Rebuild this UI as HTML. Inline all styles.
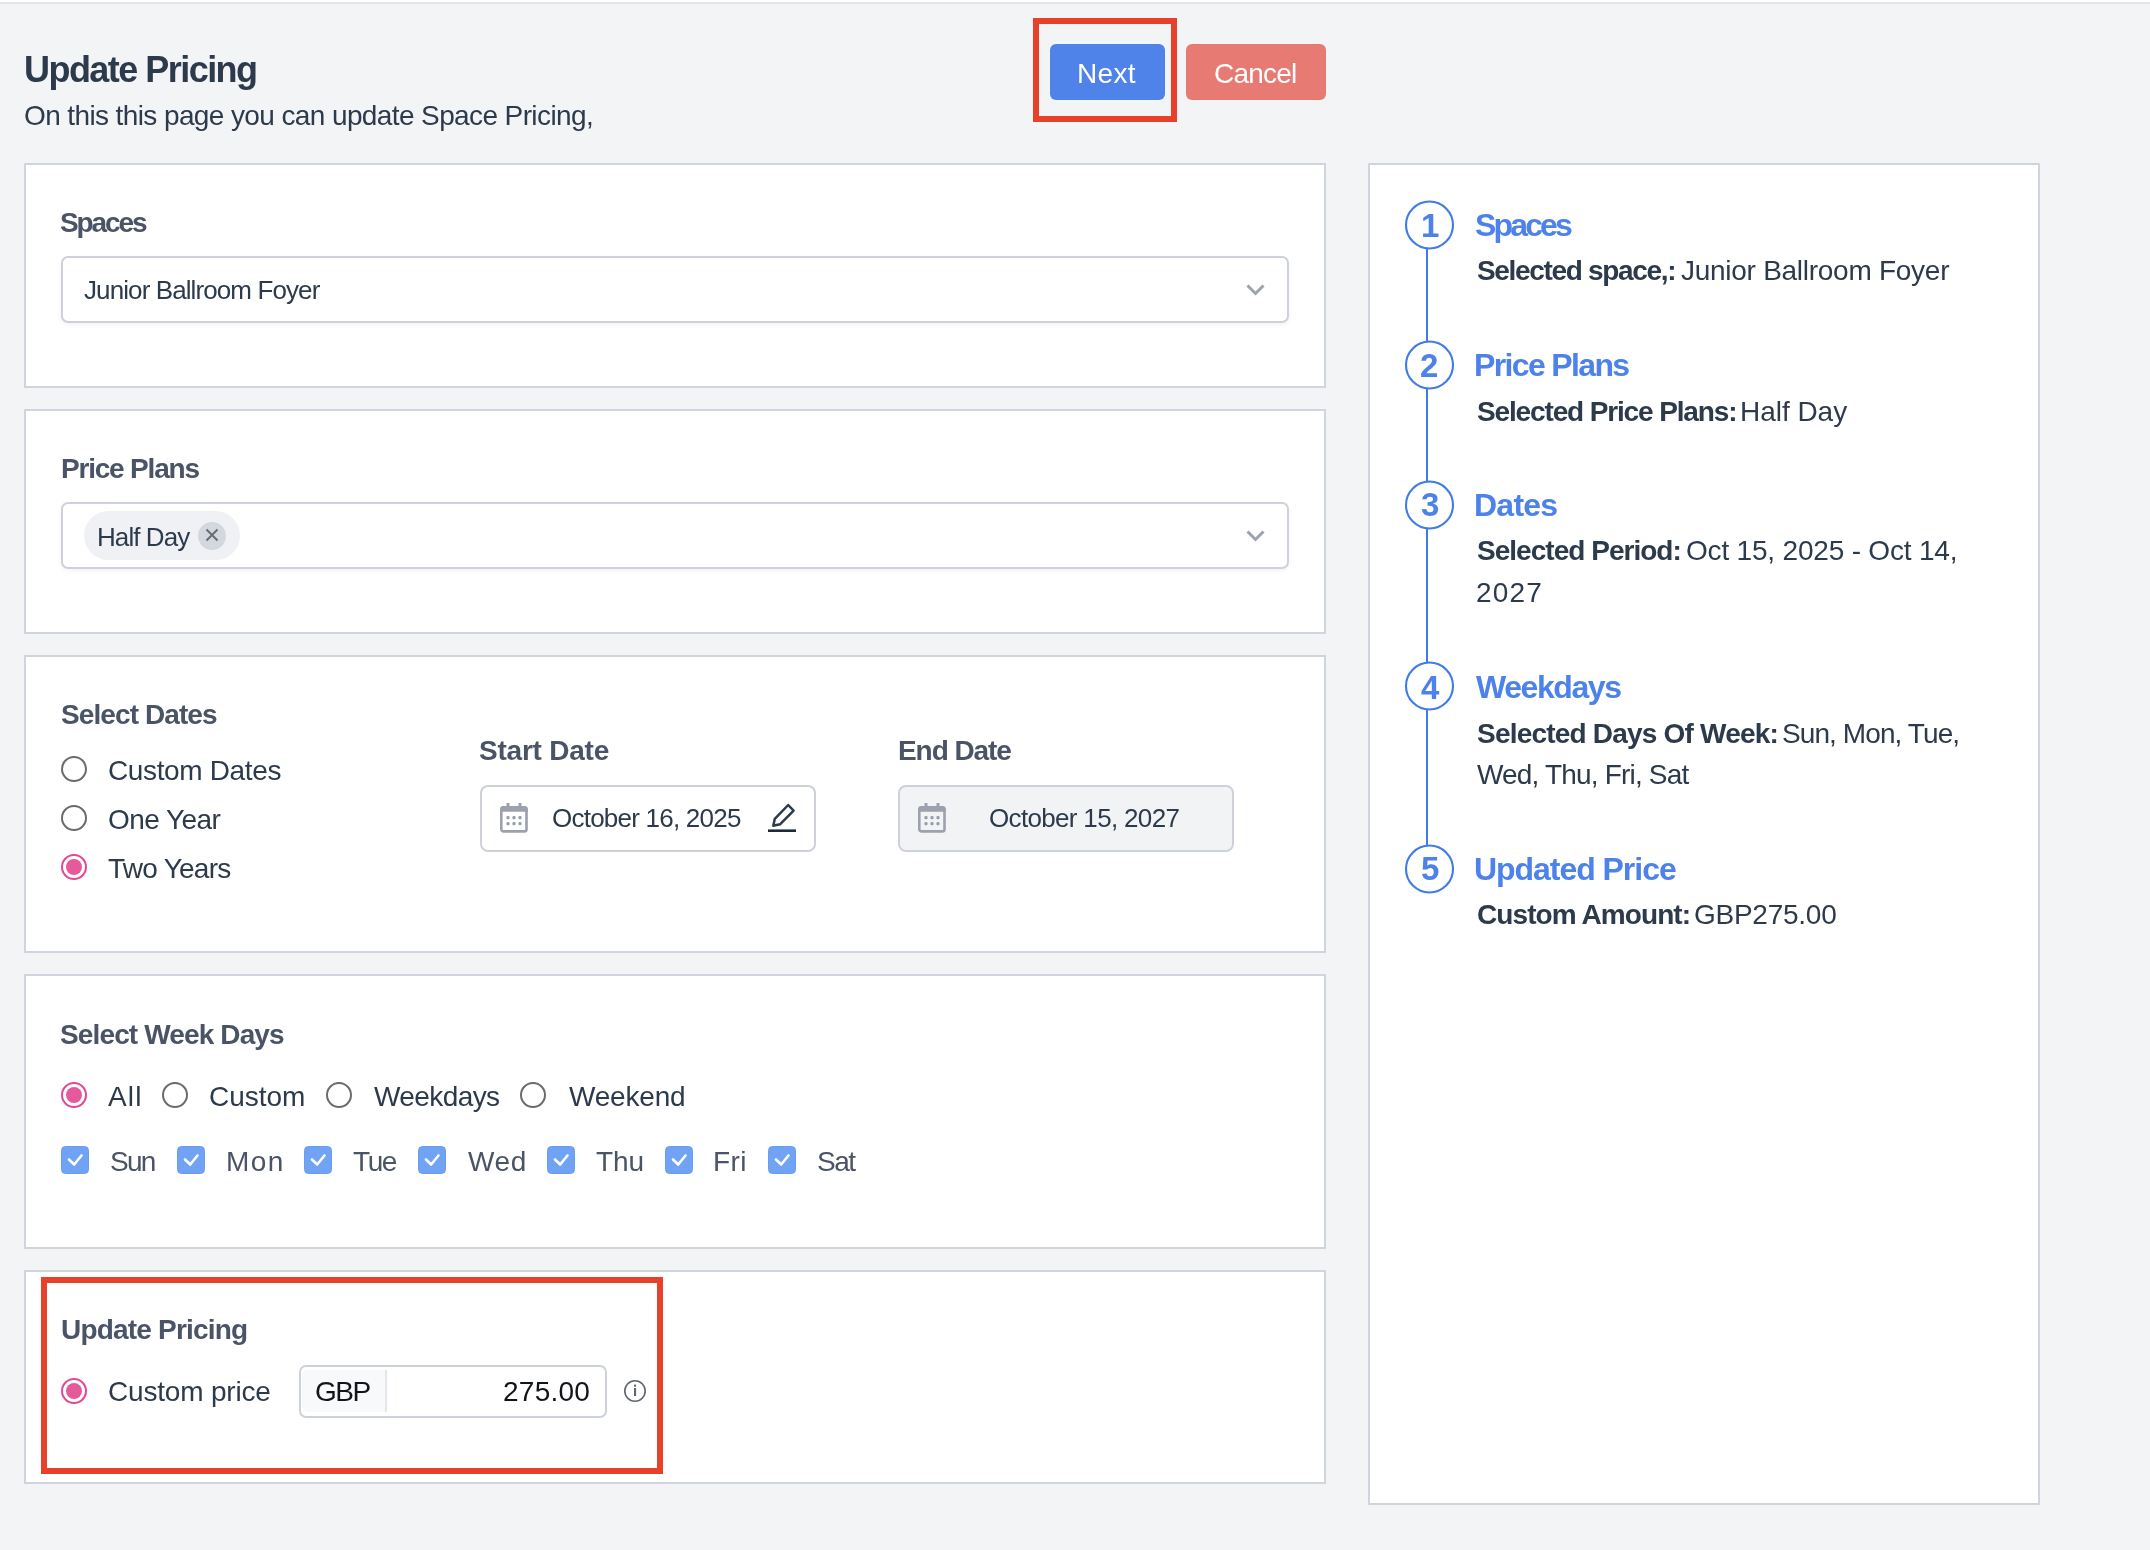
<!DOCTYPE html>
<html><head><meta charset="utf-8"><title>Update Pricing</title><style>
*{margin:0;padding:0;box-sizing:border-box}
html,body{width:2150px;height:1550px;overflow:hidden;background:#f3f4f6;font-family:"Liberation Sans",sans-serif}
.t{position:absolute;white-space:nowrap;line-height:1;will-change:transform}
.t b{font-weight:700}
.a{position:absolute}
.card{position:absolute;background:#fff;border:2px solid #d0d4dc}
.sel{position:absolute;background:#fff;border:2px solid #cdd1d9;border-radius:7px;box-shadow:0 2px 5px rgba(0,0,0,0.05)}
.inp{position:absolute;border:2px solid #cdd1d9;border-radius:8px}
.rad{position:absolute;width:26px;height:26px;border-radius:50%;border:2px solid #6b6b6b;background:#fff}
.rad.on{border-color:#e24895}
.rad.on::after{content:"";position:absolute;left:3px;top:3px;width:16px;height:16px;border-radius:50%;background:#e45a9b}
</style></head>
<body>

<div class="a" style="left:0;top:0;width:2150px;height:2px;background:#fff"></div>
<div class="a" style="left:0;top:2px;width:2150px;height:2px;background:#e3e5e9"></div>
<div class="card" style="left:24px;top:163px;width:1302px;height:225px"></div>
<div class="card" style="left:24px;top:409px;width:1302px;height:225px"></div>
<div class="card" style="left:24px;top:655px;width:1302px;height:298px"></div>
<div class="card" style="left:24px;top:974px;width:1302px;height:275px"></div>
<div class="card" style="left:24px;top:1270px;width:1302px;height:214px"></div>
<div class="card" style="left:1368px;top:163px;width:672px;height:1342px"></div>
<div class="a" style="left:1050px;top:44px;width:115px;height:56px;background:#4f83ea;border-radius:6px"></div>
<div class="a" style="left:1186px;top:44px;width:140px;height:56px;background:#e87a74;border-radius:6px"></div>
<div class="a" style="left:1033px;top:18px;width:144px;height:104px;border:6px solid #e8412b"></div>
<!-- selects -->
<div class="sel" style="left:61px;top:256px;width:1228px;height:67px"></div>
<div class="sel" style="left:61px;top:502px;width:1228px;height:67px"></div>
<svg class="a" style="left:1240px;top:278px" width="30" height="24"><polyline points="7.5,7.5 15.5,15.5 23.5,7.5" fill="none" stroke="#9ca2ae" stroke-width="3"/></svg>
<svg class="a" style="left:1240px;top:524px" width="30" height="24"><polyline points="7.5,7.5 15.5,15.5 23.5,7.5" fill="none" stroke="#9ca2ae" stroke-width="3"/></svg>
<div class="a" style="left:84px;top:511px;width:156px;height:49px;border-radius:25px;background:#f0f1f4"></div>
<svg class="a" style="left:198px;top:522px" width="28" height="28"><circle cx="14" cy="14" r="14" fill="#d3d7de"/><path d="M8.5 7.5 L19.5 18.5 M19.5 7.5 L8.5 18.5" stroke="#636b78" stroke-width="1.9"/></svg>
<!-- date radios -->
<div class="rad" style="left:61px;top:756px"></div>
<div class="rad" style="left:61px;top:805px"></div>
<div class="rad on" style="left:61px;top:854px"></div>
<!-- date inputs -->
<div class="inp" style="left:480px;top:784.5px;width:336px;height:67px;background:#fff"></div>
<div class="inp" style="left:898px;top:784.5px;width:336px;height:67px;background:#f2f3f5"></div>
<svg class="a" style="left:500px;top:803px" width="28" height="32"><rect x="1.3" y="4.3" width="25.2" height="24.1" rx="2.2" fill="none" stroke="#9ca1ad" stroke-width="2.6"/><path d="M0 6.5 Q0 3 3.5 3 L24.3 3 Q27.8 3 27.8 6.5 L27.8 8.8 L0 8.8 Z" fill="#9ca1ad"/><rect x="6.5" y="0" width="3" height="4" fill="#9ca1ad"/><rect x="18.5" y="0" width="3" height="4" fill="#9ca1ad"/><rect x="6.4" y="13" width="3.2" height="3.2" rx="1.3" fill="#979dab"/><rect x="6.4" y="19" width="3.2" height="3.2" rx="1.3" fill="#979dab"/><rect x="12.4" y="13" width="3.2" height="3.2" rx="1.3" fill="#979dab"/><rect x="12.4" y="19" width="3.2" height="3.2" rx="1.3" fill="#979dab"/><rect x="18.4" y="13" width="3.2" height="3.2" rx="1.3" fill="#979dab"/><rect x="18.4" y="19" width="3.2" height="3.2" rx="1.3" fill="#979dab"/></svg>
<svg class="a" style="left:918px;top:803px" width="28" height="32"><rect x="1.3" y="4.3" width="25.2" height="24.1" rx="2.2" fill="none" stroke="#9ca1ad" stroke-width="2.6"/><path d="M0 6.5 Q0 3 3.5 3 L24.3 3 Q27.8 3 27.8 6.5 L27.8 8.8 L0 8.8 Z" fill="#9ca1ad"/><rect x="6.5" y="0" width="3" height="4" fill="#9ca1ad"/><rect x="18.5" y="0" width="3" height="4" fill="#9ca1ad"/><rect x="6.4" y="13" width="3.2" height="3.2" rx="1.3" fill="#979dab"/><rect x="6.4" y="19" width="3.2" height="3.2" rx="1.3" fill="#979dab"/><rect x="12.4" y="13" width="3.2" height="3.2" rx="1.3" fill="#979dab"/><rect x="12.4" y="19" width="3.2" height="3.2" rx="1.3" fill="#979dab"/><rect x="18.4" y="13" width="3.2" height="3.2" rx="1.3" fill="#979dab"/><rect x="18.4" y="19" width="3.2" height="3.2" rx="1.3" fill="#979dab"/></svg>
<svg class="a" style="left:764px;top:800px" width="36" height="36"><path d="M9.3 25.8 L10.8 18.8 L24.2 5 L29.6 10.6 L16 24.3 Z" fill="none" stroke="#2d3a4c" stroke-width="2.5" stroke-linejoin="round"/><rect x="4" y="29.4" width="28" height="2.6" fill="#1e2a3b"/></svg>
<!-- week radios -->
<div class="rad on" style="left:61px;top:1082px"></div>
<div class="rad" style="left:162px;top:1082px"></div>
<div class="rad" style="left:325.6px;top:1082px"></div>
<div class="rad" style="left:520.4px;top:1082px"></div>
<svg class="a" style="left:61px;top:1146px" width="28" height="28"><rect x="0.5" y="0.5" width="27" height="27" rx="4" fill="#70a3f4" stroke="#699df1" stroke-width="1"/><polyline points="8,13.5 13.2,18.5 20.5,9.5" fill="none" stroke="#fff" stroke-width="2.6" stroke-linecap="round" stroke-linejoin="round"/></svg>
<svg class="a" style="left:177px;top:1146px" width="28" height="28"><rect x="0.5" y="0.5" width="27" height="27" rx="4" fill="#70a3f4" stroke="#699df1" stroke-width="1"/><polyline points="8,13.5 13.2,18.5 20.5,9.5" fill="none" stroke="#fff" stroke-width="2.6" stroke-linecap="round" stroke-linejoin="round"/></svg>
<svg class="a" style="left:304px;top:1146px" width="28" height="28"><rect x="0.5" y="0.5" width="27" height="27" rx="4" fill="#70a3f4" stroke="#699df1" stroke-width="1"/><polyline points="8,13.5 13.2,18.5 20.5,9.5" fill="none" stroke="#fff" stroke-width="2.6" stroke-linecap="round" stroke-linejoin="round"/></svg>
<svg class="a" style="left:418px;top:1146px" width="28" height="28"><rect x="0.5" y="0.5" width="27" height="27" rx="4" fill="#70a3f4" stroke="#699df1" stroke-width="1"/><polyline points="8,13.5 13.2,18.5 20.5,9.5" fill="none" stroke="#fff" stroke-width="2.6" stroke-linecap="round" stroke-linejoin="round"/></svg>
<svg class="a" style="left:547px;top:1146px" width="28" height="28"><rect x="0.5" y="0.5" width="27" height="27" rx="4" fill="#70a3f4" stroke="#699df1" stroke-width="1"/><polyline points="8,13.5 13.2,18.5 20.5,9.5" fill="none" stroke="#fff" stroke-width="2.6" stroke-linecap="round" stroke-linejoin="round"/></svg>
<svg class="a" style="left:665px;top:1146px" width="28" height="28"><rect x="0.5" y="0.5" width="27" height="27" rx="4" fill="#70a3f4" stroke="#699df1" stroke-width="1"/><polyline points="8,13.5 13.2,18.5 20.5,9.5" fill="none" stroke="#fff" stroke-width="2.6" stroke-linecap="round" stroke-linejoin="round"/></svg>
<svg class="a" style="left:768px;top:1146px" width="28" height="28"><rect x="0.5" y="0.5" width="27" height="27" rx="4" fill="#70a3f4" stroke="#699df1" stroke-width="1"/><polyline points="8,13.5 13.2,18.5 20.5,9.5" fill="none" stroke="#fff" stroke-width="2.6" stroke-linecap="round" stroke-linejoin="round"/></svg>
<!-- pricing -->
<div class="a" style="left:41px;top:1277px;width:622px;height:197px;border:6px solid #e8412b"></div>
<div class="rad on" style="left:61px;top:1378px"></div>
<div class="inp" style="left:299px;top:1365px;width:308px;height:53px;border-radius:7px;background:#fff"></div>
<div class="a" style="left:302px;top:1370px;width:83px;height:42px;background:#f8f9fb;border-radius:6px 0 0 6px"></div>
<div class="a" style="left:385px;top:1370px;width:2px;height:42px;background:#e3e6ea"></div>
<svg class="a" style="left:620px;top:1376px" width="30" height="30"><circle cx="15" cy="15" r="10.2" fill="none" stroke="#5d6575" stroke-width="1.6"/><rect x="14" y="12" width="2.1" height="8" fill="#5d6575"/><rect x="14" y="8.6" width="2.1" height="2.1" fill="#5d6575"/></svg>
<!-- timeline -->
<div class="a" style="left:1426px;top:248px;width:2px;height:597px;background:#3f7be9"></div>
<svg class="a" style="left:1404px;top:199.5px" width="51" height="50"><circle cx="25.5" cy="25" r="23.5" fill="#fff" stroke="#3f7be9" stroke-width="2.1"/></svg>
<svg class="a" style="left:1404px;top:339.5px" width="51" height="50"><circle cx="25.5" cy="25" r="23.5" fill="#fff" stroke="#3f7be9" stroke-width="2.1"/></svg>
<svg class="a" style="left:1404px;top:479.5px" width="51" height="50"><circle cx="25.5" cy="25" r="23.5" fill="#fff" stroke="#3f7be9" stroke-width="2.1"/></svg>
<svg class="a" style="left:1404px;top:661.0px" width="51" height="50"><circle cx="25.5" cy="25" r="23.5" fill="#fff" stroke="#3f7be9" stroke-width="2.1"/></svg>
<svg class="a" style="left:1404px;top:843.5px" width="51" height="50"><circle cx="25.5" cy="25" r="23.5" fill="#fff" stroke="#3f7be9" stroke-width="2.1"/></svg>

<div id="t_title" class="t" style="left:24.00px;top:52.02px;font-size:36px;font-weight:700;color:#2d3a4c;letter-spacing:-1.538px">Update Pricing</div>
<div id="t_sub" class="t" style="left:24.00px;top:101.79px;font-size:28px;font-weight:400;color:#2d3a4c;letter-spacing:-0.609px">On this this page you can update Space Pricing,</div>
<div id="t_next" class="t" style="left:1077.00px;top:59.79px;font-size:28px;font-weight:400;color:#ffffff;letter-spacing:0.333px">Next</div>
<div id="t_cancel" class="t" style="left:1214.00px;top:59.79px;font-size:28px;font-weight:400;color:#ffffff;letter-spacing:-0.800px">Cancel</div>
<div id="t_spaces" class="t" style="left:60.20px;top:208.79px;font-size:28px;font-weight:700;color:#4a5466;letter-spacing:-2.100px">Spaces</div>
<div id="t_junior" class="t" style="left:84.00px;top:277.49px;font-size:26px;font-weight:400;color:#2d3a4c;letter-spacing:-0.900px">Junior Ballroom Foyer</div>
<div id="t_pp" class="t" style="left:61.00px;top:454.79px;font-size:28px;font-weight:700;color:#4a5466;letter-spacing:-1.200px">Price Plans</div>
<div id="t_halfday" class="t" style="left:97.00px;top:524.49px;font-size:26px;font-weight:400;color:#2d3a4c;letter-spacing:-0.929px">Half Day</div>
<div id="t_seldates" class="t" style="left:60.60px;top:700.79px;font-size:28px;font-weight:700;color:#4a5466;letter-spacing:-0.909px">Select Dates</div>
<div id="t_custdates" class="t" style="left:108.00px;top:756.79px;font-size:28px;font-weight:400;color:#2d3a4c;letter-spacing:-0.364px">Custom Dates</div>
<div id="t_oneyear" class="t" style="left:108.00px;top:805.79px;font-size:28px;font-weight:400;color:#2d3a4c;letter-spacing:-0.571px">One Year</div>
<div id="t_twoyears" class="t" style="left:108.00px;top:854.79px;font-size:28px;font-weight:400;color:#2d3a4c;letter-spacing:-0.750px">Two Years</div>
<div id="t_startdate" class="t" style="left:479.00px;top:736.79px;font-size:28px;font-weight:700;color:#4a5466;letter-spacing:-0.222px">Start Date</div>
<div id="t_sdval" class="t" style="left:552.20px;top:805.49px;font-size:26px;font-weight:400;color:#2d3a4c;letter-spacing:-0.772px">October 16, 2025</div>
<div id="t_enddate" class="t" style="left:898.00px;top:736.79px;font-size:28px;font-weight:700;color:#4a5466;letter-spacing:-1.071px">End Date</div>
<div id="t_edval" class="t" style="left:989.00px;top:805.49px;font-size:26px;font-weight:400;color:#2d3a4c;letter-spacing:-0.667px">October 15, 2027</div>
<div id="t_selweek" class="t" style="left:60.00px;top:1020.79px;font-size:28px;font-weight:700;color:#4a5466;letter-spacing:-0.866px">Select Week Days</div>
<div id="t_all" class="t" style="left:108.00px;top:1082.79px;font-size:28px;font-weight:400;color:#2d3a4c;letter-spacing:1.150px">All</div>
<div id="t_custom" class="t" style="left:209.00px;top:1082.79px;font-size:28px;font-weight:400;color:#2d3a4c;letter-spacing:-0.020px">Custom</div>
<div id="t_weekdays" class="t" style="left:374.00px;top:1082.79px;font-size:28px;font-weight:400;color:#2d3a4c;letter-spacing:-0.597px">Weekdays</div>
<div id="t_weekend" class="t" style="left:568.80px;top:1082.79px;font-size:28px;font-weight:400;color:#2d3a4c;letter-spacing:-0.202px">Weekend</div>
<div id="t_sun" class="t" style="left:110.00px;top:1147.99px;font-size:28px;font-weight:400;color:#4a5466;letter-spacing:-1.800px">Sun</div>
<div id="t_mon" class="t" style="left:226.00px;top:1147.99px;font-size:28px;font-weight:400;color:#4a5466;letter-spacing:1.400px">Mon</div>
<div id="t_tue" class="t" style="left:353.40px;top:1147.99px;font-size:28px;font-weight:400;color:#4a5466;letter-spacing:-1.400px">Tue</div>
<div id="t_wed" class="t" style="left:468.20px;top:1147.99px;font-size:28px;font-weight:400;color:#4a5466;letter-spacing:0.600px">Wed</div>
<div id="t_thu" class="t" style="left:596.00px;top:1147.99px;font-size:28px;font-weight:400;color:#4a5466;letter-spacing:-0.150px">Thu</div>
<div id="t_fri" class="t" style="left:713.40px;top:1147.99px;font-size:28px;font-weight:400;color:#4a5466;letter-spacing:0.450px">Fri</div>
<div id="t_sat" class="t" style="left:817.00px;top:1147.99px;font-size:28px;font-weight:400;color:#4a5466;letter-spacing:-1.500px">Sat</div>
<div id="t_updpr" class="t" style="left:61.00px;top:1315.79px;font-size:28px;font-weight:700;color:#4a5466;letter-spacing:-0.808px">Update Pricing</div>
<div id="t_custprice" class="t" style="left:107.80px;top:1378.39px;font-size:28px;font-weight:400;color:#2d3a4c;letter-spacing:-0.182px">Custom price</div>
<div id="t_gbp" class="t" style="left:315.00px;top:1378.39px;font-size:28px;font-weight:400;color:#111418;letter-spacing:-1.500px">GBP</div>
<div id="t_amt" class="t" style="left:503.40px;top:1378.39px;font-size:28px;font-weight:400;color:#111418;letter-spacing:0.260px">275.00</div>
<div id="r_spaces" class="t" style="left:1474.50px;top:208.91px;font-size:32px;font-weight:700;color:#4c82ea;letter-spacing:-2.840px">Spaces</div>
<div id="rb1" class="t" style="left:1476.60px;top:257.29px;font-size:28px;font-weight:700;color:#2d3a4c;letter-spacing:-1.333px">Selected space,:</div>
<div id="rr1" class="t" style="left:1681.10px;top:257.29px;font-size:28px;font-weight:400;color:#2d3a4c;letter-spacing:-0.270px">Junior Ballroom Foyer</div>
<div id="r_pp" class="t" style="left:1474.00px;top:349.41px;font-size:32px;font-weight:700;color:#4c82ea;letter-spacing:-1.640px">Price Plans</div>
<div id="rb2" class="t" style="left:1476.50px;top:397.59px;font-size:28px;font-weight:700;color:#2d3a4c;letter-spacing:-1.140px">Selected Price Plans:</div>
<div id="rr2" class="t" style="left:1740.00px;top:397.59px;font-size:28px;font-weight:400;color:#2d3a4c;letter-spacing:-0.030px">Half Day</div>
<div id="r_dates" class="t" style="left:1474.00px;top:488.91px;font-size:32px;font-weight:700;color:#4c82ea;letter-spacing:-0.750px">Dates</div>
<div id="rb3" class="t" style="left:1476.50px;top:537.19px;font-size:28px;font-weight:700;color:#2d3a4c;letter-spacing:-0.973px">Selected Period:</div>
<div id="rr3" class="t" style="left:1686.00px;top:537.19px;font-size:28px;font-weight:400;color:#2d3a4c;letter-spacing:-0.190px">Oct 15, 2025 - Oct 14,</div>
<div id="r_dates_t2" class="t" style="left:1476.00px;top:579.39px;font-size:28px;font-weight:400;color:#2d3a4c;letter-spacing:1.167px">2027</div>
<div id="r_wd" class="t" style="left:1476.00px;top:671.11px;font-size:32px;font-weight:700;color:#4c82ea;letter-spacing:-1.429px">Weekdays</div>
<div id="rb4" class="t" style="left:1476.50px;top:719.79px;font-size:28px;font-weight:700;color:#2d3a4c;letter-spacing:-0.790px">Selected Days Of Week:</div>
<div id="rr4" class="t" style="left:1781.50px;top:719.79px;font-size:28px;font-weight:400;color:#2d3a4c;letter-spacing:-0.909px">Sun, Mon, Tue,</div>
<div id="r_wd_t2" class="t" style="left:1477.00px;top:761.19px;font-size:28px;font-weight:400;color:#2d3a4c;letter-spacing:-0.823px">Wed, Thu, Fri, Sat</div>
<div id="r_up" class="t" style="left:1474.00px;top:852.91px;font-size:32px;font-weight:700;color:#4c82ea;letter-spacing:-1.041px">Updated Price</div>
<div id="rb5" class="t" style="left:1476.50px;top:900.79px;font-size:28px;font-weight:700;color:#2d3a4c;letter-spacing:-0.923px">Custom Amount:</div>
<div id="rr5" class="t" style="left:1694.00px;top:900.79px;font-size:28px;font-weight:400;color:#2d3a4c;letter-spacing:-0.252px">GBP275.00</div>
<div id="n1" class="t" style="left:1421.00px;top:208.56px;font-size:33px;font-weight:700;color:#4c82ea;letter-spacing:-4.000px">1</div>
<div id="n2" class="t" style="left:1420.00px;top:348.56px;font-size:33px;font-weight:700;color:#4c82ea;letter-spacing:0.000px">2</div>
<div id="n3" class="t" style="left:1421.00px;top:488.06px;font-size:33px;font-weight:700;color:#4c82ea;letter-spacing:0.000px">3</div>
<div id="n4" class="t" style="left:1421.00px;top:670.56px;font-size:33px;font-weight:700;color:#4c82ea;letter-spacing:0.000px">4</div>
<div id="n5" class="t" style="left:1421.00px;top:852.06px;font-size:33px;font-weight:700;color:#4c82ea;letter-spacing:0.000px">5</div>
</body></html>
